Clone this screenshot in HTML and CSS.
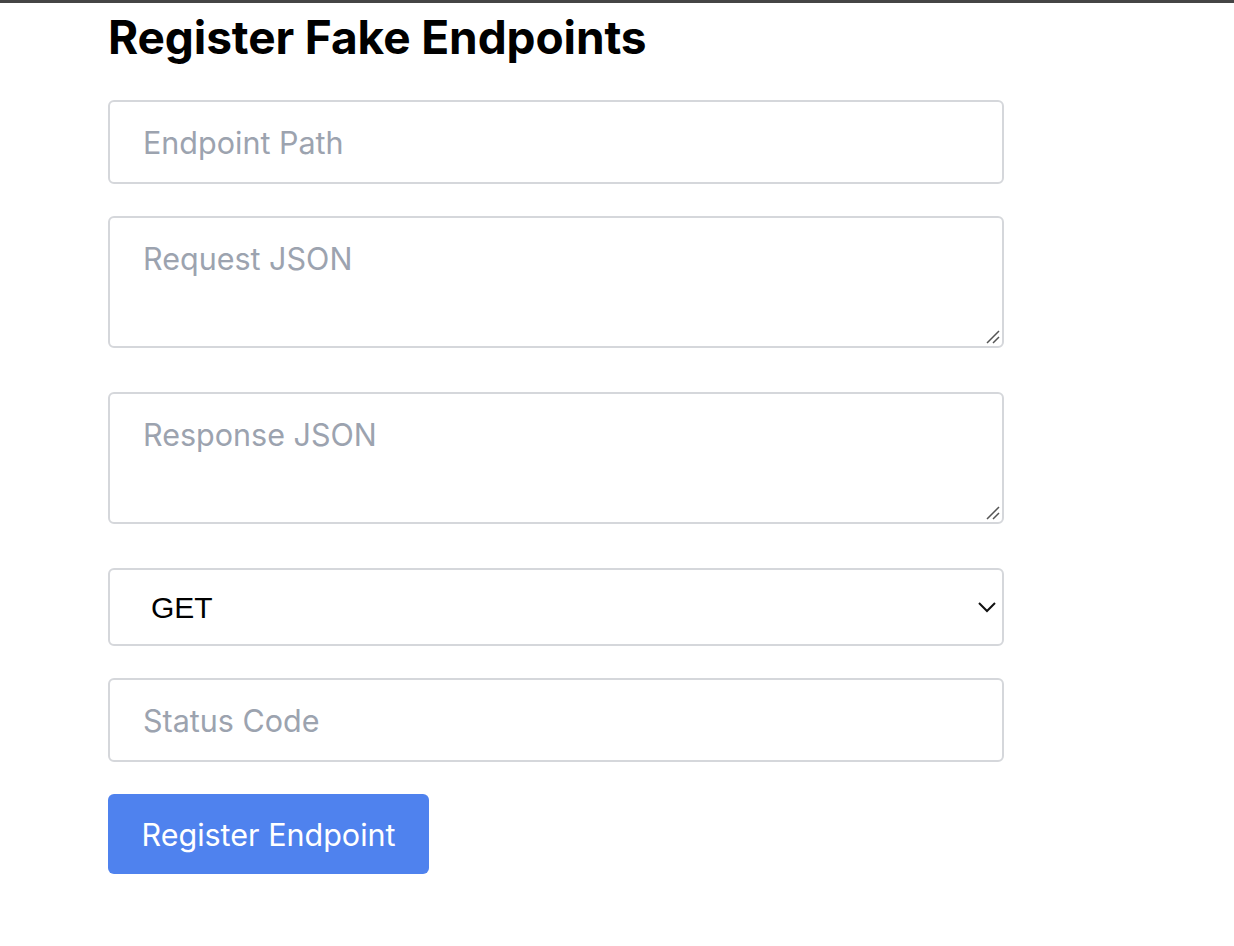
FILE: index.html
```html
<!DOCTYPE html>
<html lang="en">
<head>
<meta charset="utf-8">
<title>Register Fake Endpoints</title>
<link rel="stylesheet" href="styles.css">
</head>
<body>
<div class="topbar"></div>
<main class="page">
  <h1 class="title">Register Fake Endpoints</h1>
  <form class="form">
    <input class="field field-input" type="text" placeholder="Endpoint Path">
    <div class="area-wrap">
      <textarea class="field field-area" placeholder="Request JSON"></textarea>
      <svg class="grip" width="16" height="16" viewBox="0 0 16 16" aria-hidden="true">
        <path d="M2 14 L14 2 M8 14 L14 8" fill="none" stroke="#555" stroke-width="1.5"/>
      </svg>
    </div>
    <div class="area-wrap">
      <textarea class="field field-area" placeholder="Response JSON"></textarea>
      <svg class="grip" width="16" height="16" viewBox="0 0 16 16" aria-hidden="true">
        <path d="M2 14 L14 2 M8 14 L14 8" fill="none" stroke="#555" stroke-width="1.5"/>
      </svg>
    </div>
    <div class="select-wrap">
      <select class="field field-select">
        <option>GET</option>
        <option>POST</option>
        <option>PUT</option>
        <option>DELETE</option>
      </select>
      <svg class="chevron" width="20" height="12" viewBox="0 0 20 12" aria-hidden="true">
        <path d="M2 2 L10 10 L18 2" fill="none" stroke="#111" stroke-width="2"/>
      </svg>
    </div>
    <input class="field field-input" type="text" placeholder="Status Code">
    <button class="btn" type="button">Register Endpoint</button>
  </form>
</main>
</body>
</html>
```
FILE: styles.css
```css
html, body {
  margin: 0;
  padding: 0;
  background: #ffffff;
}

body {
  font-family: Inter, "Liberation Sans", Arial, sans-serif;
  color: #000;
}

.topbar {
  height: 3px;
  background: #454545;
}

.page {
  padding-left: 108px;
  width: 896px;
}

.title {
  margin: 0;
  padding-top: 5px;
  font-size: 46px;
  font-weight: 700;
  line-height: 58px;
  letter-spacing: -0.1px;
}

.form {
  display: flex;
  flex-direction: column;
  margin-top: 34px;
}

.field {
  box-sizing: border-box;
  width: 896px;
  border: 2px solid #d5d7db;
  border-radius: 6px;
  background: #fff;
  font-family: Inter, "Liberation Sans", Arial, sans-serif;
  font-size: 30.5px;
  color: #000;
  outline: none;
  margin: 0;
}

.field::placeholder {
  color: #9ca3af;
  opacity: 1;
}

.field-input {
  height: 84px;
  padding: 0 33px;
  margin-bottom: 32px;
}

.area-wrap {
  position: relative;
  width: 896px;
  margin-bottom: 44px;
}

.field-area {
  display: block;
  height: 132px;
  padding: 21px 33px;
  line-height: 40px;
  resize: none;
}

.grip {
  position: absolute;
  right: 3px;
  bottom: 3px;
}

.select-wrap {
  position: relative;
  width: 896px;
  margin-bottom: 32px;
}

.field-select {
  display: block;
  height: 78px;
  padding: 0 41px;
  font-family: "Liberation Sans", Arial, sans-serif;
  font-size: 30px;
  -webkit-appearance: none;
  appearance: none;
}

.chevron {
  position: absolute;
  right: 7px;
  top: 33px;
}

.btn {
  align-self: flex-start;
  width: 321px;
  height: 80px;
  border: none;
  border-radius: 6px;
  background: #4f82ee;
  color: #fff;
  font-family: Inter, "Liberation Sans", Arial, sans-serif;
  font-size: 30.5px;
  cursor: pointer;
}
```
